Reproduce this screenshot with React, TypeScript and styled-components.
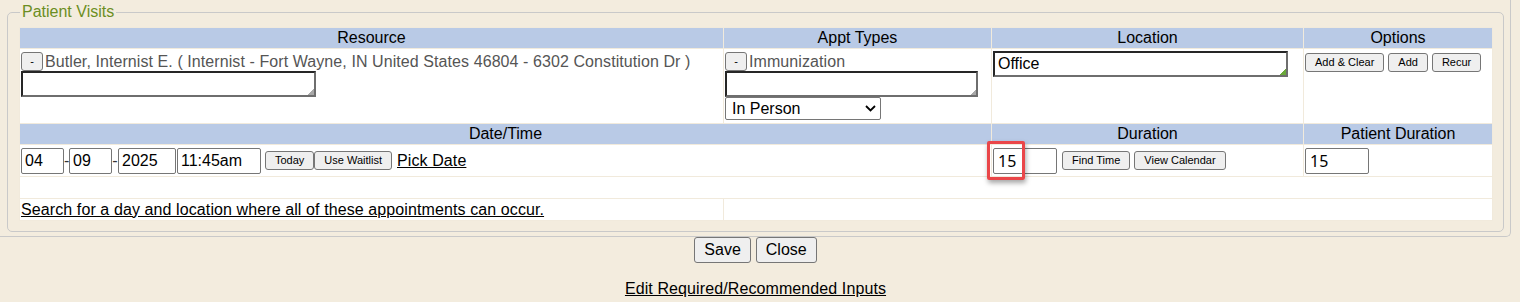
import React from 'react';
import styled, { createGlobalStyle } from 'styled-components';

const Global = createGlobalStyle`
  html, body { margin: 0; padding: 0; background: #f3ecde; }
  body {
    font-family: "Liberation Sans", Arial, sans-serif;
    font-size: 16px;
    color: #000;
  }
  * { box-sizing: border-box; }
`;

const Page = styled.div`
  width: 1520px;
  height: 302px;
  overflow: hidden;
`;

const Frame = styled.div`
  width: 1511px;
  padding: 2px 0 4px 0;
  border-right: 1px solid #c9c9c9;
  border-bottom: 1px solid #c9c9c9;
  border-bottom-right-radius: 5px;
  display: flow-root;
`;

const Fieldset = styled.fieldset`
  margin: 0 6px 0 7px;
  padding: 5px 11px 10px 11px;
  border: 1px solid #c9c9c9;
  border-radius: 5px;
  min-width: 0;
`;

const Legend = styled.legend`
  margin-left: 1px;
  padding: 0 2px;
  line-height: 20px;
  font-size: 16px;
  color: #6b8e23;
`;

const Grid = styled.table`
  width: 1473px;
  table-layout: fixed;
  border-collapse: collapse;
  background: #fff;
`;

const HeadCell = styled.th`
  height: 21px;
  padding: 0;
  background: #b9cae6;
  border: 1px solid #f1eadc;
  font-weight: normal;
  font-size: 16px;
  line-height: 20px;
  text-align: center;
`;

const Cell = styled.td<{ $top?: boolean; $h: number }>`
  height: ${p => p.$h}px;
  padding: 1px;
  border: 1px solid #f1eadc;
  vertical-align: ${p => (p.$top ? 'top' : 'middle')};
`;

const ItemLine = styled.div`
  display: flex;
  align-items: center;
  height: 19px;
  margin-top: 2px;
`;

const ItemText = styled.span`
  margin-left: 2px;
  color: #555;
  font-size: 16px;
  line-height: 18px;
  letter-spacing: 0.08px;
  white-space: nowrap;
`;

const SmallButton = styled.button`
  height: 19px;
  padding: 0 9px;
  border: 1px solid #767676;
  border-radius: 3px;
  background: #efefef;
  color: #000;
  font-family: "Liberation Sans", Arial, sans-serif;
  font-size: 11px;
  line-height: 17px;
  white-space: nowrap;
  flex: none;
`;

const ToggleButton = styled(SmallButton)`
  width: 22px;
  padding: 0;
`;

const GripField = styled.div<{ $w: number; $grip: string; $mt: number }>`
  position: relative;
  width: ${p => p.$w}px;
  height: 26px;
  margin-top: ${p => p.$mt}px;
  &::after {
    content: '';
    position: absolute;
    right: 2px;
    bottom: 2px;
    width: 6px;
    height: 6px;
    background: linear-gradient(135deg, transparent 50%, ${p => p.$grip} 50%);
  }
`;

const Area = styled.textarea`
  display: block;
  width: 100%;
  height: 100%;
  margin: 0;
  padding: 2px 3px;
  resize: none;
  overflow: hidden;
  border-style: solid;
  border-width: 2px;
  border-color: #262626 #6e6e6e #6e6e6e #262626;
  background: #fff;
  font-family: "Liberation Sans", Arial, sans-serif;
  font-size: 16px;
  line-height: 18px;
  color: #000;
`;

const SelectBox = styled.div`
  position: relative;
  width: 156px;
  height: 23px;
`;

const Select = styled.select`
  appearance: none;
  width: 100%;
  height: 100%;
  margin: 0;
  padding: 0 24px 0 6px;
  border: 1px solid #767676;
  border-radius: 2px;
  background: #fff;
  color: #000;
  font-family: "Liberation Sans", Arial, sans-serif;
  font-size: 16px;
`;

const Chevron = styled.svg`
  position: absolute;
  right: 5px;
  top: 8px;
  pointer-events: none;
`;

const ButtonRow = styled.div`
  display: flex;
  gap: 4px;
  margin-top: 3px;
`;

const InlineRow = styled.div`
  display: flex;
  align-items: center;
  position: relative;
`;

const TextInput = styled.input<{ $w: number; $ml?: number }>`
  width: ${p => p.$w}px;
  height: 26px;
  margin: 0 0 0 ${p => p.$ml ?? 0}px;
  padding: 0 3px;
  border: 1px solid #767676;
  border-radius: 2px;
  background: #fff;
  color: #000;
  font-family: "Liberation Sans", Arial, sans-serif;
  font-size: 16px;
  flex: none;
`;

const NumberInput = styled(TextInput)`
  font-family: "Noto Sans", "Open Sans", sans-serif;
  padding-left: 4px;
`;

const Dash = styled.span<{ $w: number }>`
  width: ${p => p.$w}px;
  font-size: 16px;
  line-height: 18px;
  text-align: center;
  color: #333;
`;

const Spaced = styled.div<{ $ml: number }>`
  display: flex;
  margin-left: ${p => p.$ml}px;
`;

const PlainLink = styled.a<{ $ml?: number }>`
  margin-left: ${p => p.$ml ?? 0}px;
  color: #000;
  text-decoration: underline;
  font-size: 16px;
  line-height: 18px;
  letter-spacing: 0.1px;
  white-space: nowrap;
  cursor: pointer;
`;

const Highlight = styled.div`
  position: absolute;
  left: -6px;
  top: -7px;
  width: 38px;
  height: 39px;
  border: 3px solid #ea4649;
  border-radius: 2px;
  box-shadow: 1px 3px 5px rgba(0, 0, 0, 0.35);
  pointer-events: none;
`;

const Footer = styled.div`
  width: 1511px;
  display: flex;
  flex-direction: column;
  align-items: center;
`;

const FooterButtons = styled.div`
  display: flex;
  gap: 5px;
`;

const BigButton = styled.button`
  height: 26px;
  padding: 0 9px;
  border: 1px solid #767676;
  border-radius: 3px;
  background: #efefef;
  color: #000;
  font-family: "Liberation Sans", Arial, sans-serif;
  font-size: 16px;
`;

const FooterLink = styled(PlainLink)`
  margin-top: 17px;
`;

export default function App() {
  return (
    <Page>
      <Global />
      <Frame>
        <Fieldset>
          <Legend>Patient Visits</Legend>
          <Grid>
            <colgroup>
              <col style={{ width: 704 }} />
              <col style={{ width: 268 }} />
              <col style={{ width: 312 }} />
              <col style={{ width: 189 }} />
            </colgroup>
            <tbody>
              <tr>
                <HeadCell>Resource</HeadCell>
                <HeadCell>Appt Types</HeadCell>
                <HeadCell>Location</HeadCell>
                <HeadCell>Options</HeadCell>
              </tr>
              <tr>
                <Cell $top $h={75}>
                  <ItemLine>
                    <ToggleButton>-</ToggleButton>
                    <ItemText>
                      Butler, Internist E. ( Internist - Fort Wayne, IN United States 46804 - 6302 Constitution Dr )
                    </ItemText>
                  </ItemLine>
                  <GripField $w={295} $grip="#a8a8a8" $mt={0}>
                    <Area defaultValue="" />
                  </GripField>
                </Cell>
                <Cell $top $h={75}>
                  <ItemLine>
                    <ToggleButton>-</ToggleButton>
                    <ItemText>Immunization</ItemText>
                  </ItemLine>
                  <GripField $w={253} $grip="#a8a8a8" $mt={0}>
                    <Area defaultValue="" />
                  </GripField>
                  <SelectBox>
                    <Select defaultValue="In Person">
                      <option>In Person</option>
                      <option>Telehealth</option>
                    </Select>
                    <Chevron width="11" height="7" viewBox="0 0 11 7">
                      <path d="M1 1 L5.5 5.5 L10 1" fill="none" stroke="#000" strokeWidth="1.8" />
                    </Chevron>
                  </SelectBox>
                </Cell>
                <Cell $top $h={75}>
                  <GripField $w={295} $grip="#6aa83a" $mt={1}>
                    <Area defaultValue="Office" />
                  </GripField>
                </Cell>
                <Cell $top $h={75}>
                  <ButtonRow>
                    <SmallButton>Add &amp; Clear</SmallButton>
                    <SmallButton>Add</SmallButton>
                    <SmallButton>Recur</SmallButton>
                  </ButtonRow>
                </Cell>
              </tr>
              <tr>
                <HeadCell colSpan={2}>Date/Time</HeadCell>
                <HeadCell>Duration</HeadCell>
                <HeadCell>Patient Duration</HeadCell>
              </tr>
              <tr>
                <Cell colSpan={2} $h={32}>
                  <InlineRow>
                    <TextInput $w={43} defaultValue="04" />
                    <Dash $w={5}>-</Dash>
                    <TextInput $w={43} defaultValue="09" />
                    <Dash $w={6}>-</Dash>
                    <TextInput $w={58} defaultValue="2025" />
                    <TextInput $w={84} $ml={1} defaultValue="11:45am" />
                    <Spaced $ml={4}>
                      <SmallButton>Today</SmallButton>
                      <SmallButton>Use Waitlist</SmallButton>
                    </Spaced>
                    <PlainLink $ml={5}>Pick Date</PlainLink>
                  </InlineRow>
                </Cell>
                <Cell $h={32}>
                  <InlineRow>
                    <NumberInput $w={64} defaultValue="15" />
                    <Spaced $ml={5}>
                      <SmallButton>Find Time</SmallButton>
                    </Spaced>
                    <Spaced $ml={4}>
                      <SmallButton>View Calendar</SmallButton>
                    </Spaced>
                    <Highlight />
                  </InlineRow>
                </Cell>
                <Cell $h={32}>
                  <InlineRow>
                    <NumberInput $w={64} defaultValue="15" />
                  </InlineRow>
                </Cell>
              </tr>
              <tr>
                <Cell colSpan={4} $h={22} />
              </tr>
              <tr>
                <Cell $h={22}>
                  <PlainLink>Search for a day and location where all of these appointments can occur.</PlainLink>
                </Cell>
                <Cell colSpan={3} $h={22} />
              </tr>
            </tbody>
          </Grid>
        </Fieldset>
      </Frame>
      <Footer>
        <FooterButtons>
          <BigButton>Save</BigButton>
          <BigButton>Close</BigButton>
        </FooterButtons>
        <FooterLink>Edit Required/Recommended Inputs</FooterLink>
      </Footer>
    </Page>
  );
}
